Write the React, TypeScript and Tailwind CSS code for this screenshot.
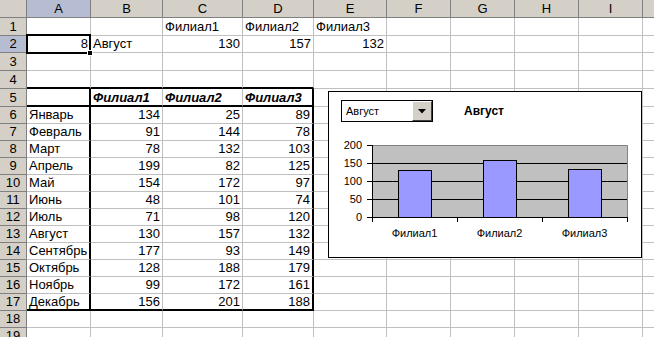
type Cell = { t: string; right?: boolean; bi?: boolean };

const COL_LETTERS = ["A", "B", "C", "D", "E", "F", "G", "H", "I", ""];
const COL_W = [
  "w-[64px]",
  "w-[72px]",
  "w-[80px]",
  "w-[71px]",
  "w-[73px]",
  "w-[64px]",
  "w-[64px]",
  "w-[64px]",
  "w-[64px]",
  "w-[20px]",
];

const months: [string, number, number, number][] = [
  ["Январь", 134, 25, 89],
  ["Февраль", 91, 144, 78],
  ["Март", 78, 132, 103],
  ["Апрель", 199, 82, 125],
  ["Май", 154, 172, 97],
  ["Июнь", 48, 101, 74],
  ["Июль", 71, 98, 120],
  ["Август", 130, 157, 132],
  ["Сентябрь", 177, 93, 149],
  ["Октябрь", 128, 188, 179],
  ["Ноябрь", 99, 172, 161],
  ["Декабрь", 156, 201, 188],
];

// a few rows are a pixel taller in the screenshot
const tallRow = (r: number) => r === 1 || r === 3 || r === 4 || r === 5;

function cellAt(r: number, c: number): Cell | null {
  if (r === 1 && c >= 2 && c <= 4) return { t: "Филиал" + (c - 1) };
  if (r === 2) {
    if (c === 0) return { t: "8", right: true };
    if (c === 1) return { t: "Август" };
    if (c === 2) return { t: "130", right: true };
    if (c === 3) return { t: "157", right: true };
    if (c === 4) return { t: "132", right: true };
  }
  if (r === 5 && c >= 1 && c <= 3) return { t: "Филиал" + c, bi: true };
  if (r >= 6 && r <= 17 && c <= 3) {
    const m = months[r - 6];
    return c === 0 ? { t: m[0] } : { t: String(m[c]), right: true };
  }
  return null;
}

function SheetCell({ r, c }: { r: number; c: number }) {
  const inTable = r >= 5 && r <= 17;
  const thickR = inTable && (c === 0 || c === 3);
  const thickB = (r === 4 || r === 5 || r === 17) && c <= 3;
  const cell = cellAt(r, c);
  return (
    <div
      className={`${COL_W[c]} shrink-0 h-full overflow-visible whitespace-nowrap ${
        tallRow(r) ? "leading-[17px]" : "leading-[16px]"
      } ${thickR ? "border-r-2 border-r-black" : "border-r border-r-[#c0c0c0]"} ${
        thickB ? "border-b-2 border-b-black" : "border-b border-b-[#c0c0c0]"
      } ${cell?.right ? "text-right pr-[2px]" : "text-left pl-[2px]"} ${
        cell?.bi ? "font-bold italic" : ""
      }`}
    >
      {cell?.t}
    </div>
  );
}

function Chart() {
  const vals = [130, 157, 132];
  const y = (v: number) => 95 - v * 0.36;
  return (
    <div className="absolute left-[328px] top-[91px] w-[314px] h-[167px] bg-white border border-black">
      <div className="flex items-start pt-[8px] pl-[12px]">
        <div className="w-[92px] h-[22px] flex border border-black bg-white">
          <div className="flex-1 pl-[4px] text-[11px] leading-[20px]">Август</div>
          <div className="w-[20px] h-[20px] bg-[#d4d0c8] border border-t-white border-l-white border-r-[#404040] border-b-[#404040] flex items-center justify-center">
            <svg width="8" height="5" viewBox="0 0 8 5">
              <path d="M0 0H8L4 4.5Z" fill="black" />
            </svg>
          </div>
        </div>
        <div className="ml-[31px] text-[12px] font-bold leading-[22px]">Август</div>
      </div>
      <svg width="312" height="135" className="block">
        <rect x="43" y="23" width="255" height="72" fill="#c0c0c0" />
        <path d="M43 23.5H298.5V95" stroke="#808080" fill="none" />
        {[41, 59, 77].map((gy) => (
          <line key={gy} x1="38" x2="298" y1={gy + 0.5} y2={gy + 0.5} stroke="black" />
        ))}
        <line x1="38" x2="43" y1="23.5" y2="23.5" stroke="black" />
        <line x1="43.5" x2="43.5" y1="23" y2="96" stroke="black" />
        <line x1="38" x2="299" y1="95.5" y2="95.5" stroke="black" />
        {[43, 128, 213, 298].map((tx) => (
          <line key={tx} x1={tx + 0.5} x2={tx + 0.5} y1="95" y2="100" stroke="black" />
        ))}
        {vals.map((v, i) => {
          const cx = 43 + 42.5 + i * 85;
          return (
            <rect
              key={i}
              x={Math.round(cx - 16.5) + 0.5}
              y={Math.round(y(v)) + 0.5}
              width="33"
              height={95 - Math.round(y(v))}
              fill="#9999ff"
              stroke="black"
            />
          );
        })}
        {[200, 150, 100, 50, 0].map((v, i) => (
          <text
            key={v}
            x="33"
            y={23 + i * 18 + 4}
            textAnchor="end"
            fontSize="11"
            fontFamily="Liberation Sans, Arial, sans-serif"
          >
            {v}
          </text>
        ))}
        {[1, 2, 3].map((n, i) => (
          <text
            key={n}
            x={85.5 + i * 85}
            y="115"
            textAnchor="middle"
            fontSize="11"
            fontFamily="Liberation Sans, Arial, sans-serif"
          >
            {"Филиал" + n}
          </text>
        ))}
      </svg>
    </div>
  );
}

export default function App() {
  const rows = Array.from({ length: 19 }, (_, i) => i + 1);
  return (
    <div className="relative w-[654px] h-[337px] overflow-hidden bg-white text-black text-[13px] font-['Liberation_Sans',Arial,sans-serif]">
      {/* column headers */}
      <div className="flex h-[18px]">
        <div className="w-[27px] shrink-0 bg-[#d4d0c8] border-r border-b border-[#808080]" />
        {COL_LETTERS.map((l, c) => (
          <div
            key={c}
            className={`${COL_W[c]} shrink-0 border-r border-b border-[#808080] text-center leading-[17px] ${
              c === 0 ? "bg-[#b6bdd2]" : "bg-[#d4d0c8]"
            }`}
          >
            {l}
          </div>
        ))}
      </div>

      {rows.map((r) => (
        <div key={r} className={`flex ${tallRow(r) ? "h-[18px]" : "h-[17px]"}`}>
          <div
            className={`w-[27px] shrink-0 border-r border-b border-[#808080] text-center ${
              tallRow(r) ? "leading-[17px]" : "leading-[16px]"
            } ${r === 2 ? "bg-[#b6bdd2]" : "bg-[#d4d0c8]"}`}
          >
            {r}
          </div>
          {COL_LETTERS.map((_, c) => (
            <SheetCell key={c} r={r} c={c} />
          ))}
        </div>
      ))}

      {/* active cell A2 */}
      <div className="absolute left-[26px] top-[34px] w-[65px] h-[20px] border-2 border-black pointer-events-none" />
      <div className="absolute left-[87px] top-[50px] w-[6px] h-[6px] bg-black border border-white" />

      <Chart />
    </div>
  );
}
